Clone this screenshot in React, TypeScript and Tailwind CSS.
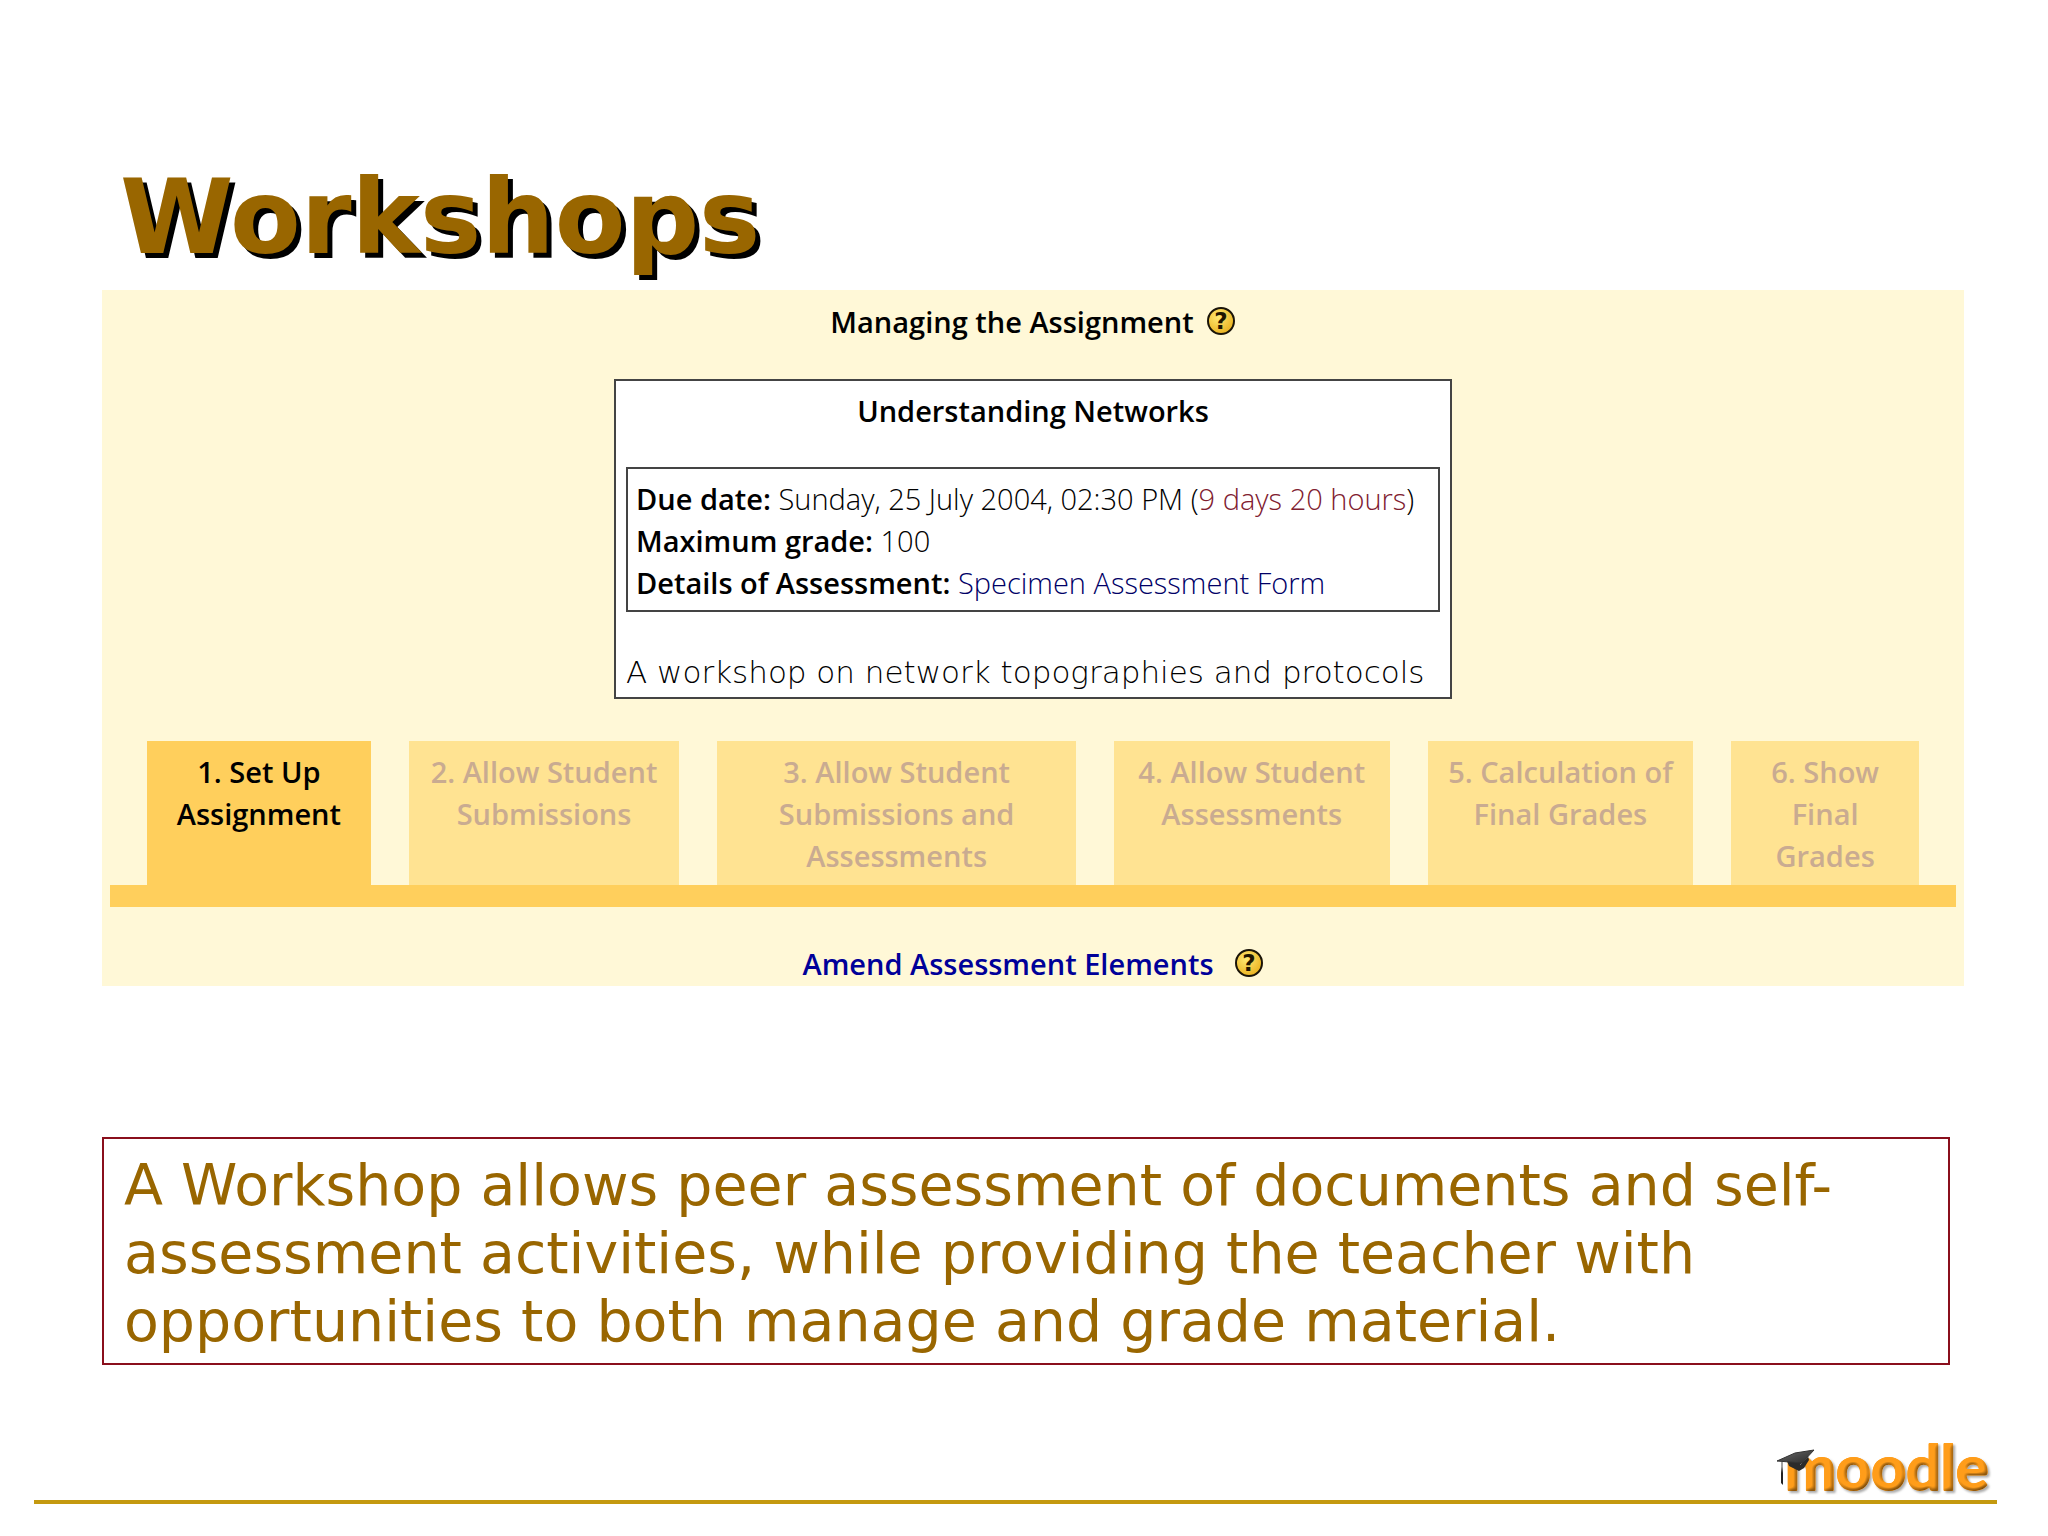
const stages = [
  { lines: ['1. Set Up', 'Assignment'], active: true },
  { lines: ['2. Allow Student', 'Submissions'] },
  { lines: ['3. Allow Student', 'Submissions and', 'Assessments'] },
  { lines: ['4. Allow Student', 'Assessments'] },
  { lines: ['5. Calculation of', 'Final Grades'] },
  { lines: ['6. Show', 'Final', 'Grades'] },
]

const HelpButton = () => (
  <button type="button" aria-label="Help" className="shrink-0">
    <svg width="30" height="30" viewBox="0 0 30 30">
      <defs>
        <radialGradient id="coin" cx="0.4" cy="0.35" r="0.7">
          <stop offset="0" stopColor="#ffe873" />
          <stop offset="1" stopColor="#e9b01c" />
        </radialGradient>
      </defs>
      <circle cx="15" cy="14" r="13" fill="url(#coin)" stroke="#1a1408" strokeWidth="2" />
      <text x="15" y="22" textAnchor="middle" className="font-['DejaVu_Sans'] text-[23px] font-bold" fill="#1f1500">?</text>
    </svg>
  </button>
)

const MoodleLogo = () => (
  <svg width="228" height="76" viewBox="0 0 228 76" role="img" aria-label="moodle" className="-mr-1 -mb-1 overflow-visible">
    <defs>
      <linearGradient id="cap" x1="0" y1="0" x2="1" y2="1">
        <stop offset="0" stopColor="#777" />
        <stop offset="0.5" stopColor="#4a4a4a" />
        <stop offset="1" stopColor="#2a2a2a" />
      </linearGradient>
      <filter id="bevel" x="-5%" y="-10%" width="112%" height="130%" colorInterpolationFilters="sRGB">
        <feDropShadow in="SourceGraphic" dx="2" dy="2" stdDeviation="1" floodColor="#888" floodOpacity="0.7" result="shadow" />
        <feGaussianBlur in="SourceAlpha" stdDeviation="2" result="soft" />
        <feDiffuseLighting in="soft" surfaceScale="2" diffuseConstant="1.25" lightingColor="#fff" result="light">
          <feDistantLight azimuth="235" elevation="58" />
        </feDiffuseLighting>
        <feComposite in="light" in2="SourceGraphic" operator="arithmetic" k1="1" k2="0" k3="0" k4="0" result="shaded" />
        <feComposite in="shaded" in2="SourceAlpha" operator="in" result="letters" />
        <feMerge>
          <feMergeNode in="shadow" />
          <feMergeNode in="letters" />
        </feMerge>
      </filter>
    </defs>
    <text x="12" y="62" className="font-['Lato'] text-[61px] font-bold" fill="#ff9d1a" stroke="#ff9d1a" strokeWidth="2" strokeLinejoin="round" filter="url(#bevel)">moodle</text>
    <path d="M14 33 L16 38 L26 43 L31 40 L36 32 L35 28 Z" fill="#2b2b2b" />
    <path d="M27 37 L35 29" stroke="#777" strokeWidth="1" />
    <path d="M4 33 L22 25 L41 22 L29 35 Z" fill="url(#cap)" stroke="#333" strokeWidth="1" strokeLinejoin="round" />
    <path d="M9 34 L9 47" stroke="#444" strokeWidth="1" />
    <path d="M9 39 L10 45 L10 57 L8 55 L8 45 Z" fill="#222" />
  </svg>
)

const App = () => {
  return (
    <div className="flex min-h-screen flex-col bg-white font-['DejaVu_Sans',sans-serif]">
      <main className="pt-[157px] pr-[84px] pl-[102px]">
        <h1 className="pl-[18px] text-[103px] leading-[120px] font-bold text-[#996600] [text-shadow:5px_5px_0_#000]">Workshops</h1>

        <section className="mt-[13px] bg-[#fff8d7] px-2 pt-[11px] pb-px font-['Open_Sans',sans-serif] text-[29px] leading-[42px] text-black">
          <div className="flex items-center justify-center gap-3">
            <h2 className="font-semibold">Managing the Assignment</h2>
            <HelpButton />
          </div>

          <div className="mx-auto mt-9 w-[838px] max-w-full border-2 border-[#444] bg-white px-[10px] pt-[9px] pb-1">
            <h3 className="text-center font-semibold">Understanding Networks</h3>
            <div className="mt-[35px] border-2 border-[#444] px-2 pt-[9px] pb-[6px] font-light">
              <p><b className="font-semibold">Due date:</b> Sunday, 25 July 2004, 02:30 PM (<span className="text-[#802030]">9 days 20 hours</span>)</p>
              <p><b className="font-semibold">Maximum grade:</b> 100</p>
              <p><b className="font-semibold">Details of Assessment:</b> <a href="#specimen" className="text-[#000066]">Specimen Assessment Form</a></p>
            </div>
            <p className="mt-[39px] font-['DejaVu_Sans'] text-[31px] font-extralight">A workshop on network topographies and protocols</p>
          </div>

          <nav className="mt-[42px] grid grid-cols-[224fr_271fr_359fr_276fr_266fr_188fr] gap-[38px] border-b-[22px] border-[#ffcf5c] px-[37px]">
            {stages.map((stage) => (
              <button
                key={stage.lines.join(' ')}
                type="button"
                disabled={!stage.active}
                className={`flex h-36 flex-col items-center pt-[10px] font-semibold whitespace-nowrap ${stage.active ? 'bg-[#ffcf5c] text-black' : 'bg-[#ffe392] text-[#c9ab91]'}`}
              >
                {stage.lines.map((line) => (
                  <span key={line}>{line}</span>
                ))}
              </button>
            ))}
          </nav>

          <div className="mt-9 flex items-center justify-center gap-5">
            <a href="#amend" className="font-semibold text-[#000099]">Amend Assessment Elements</a>
            <HelpButton />
          </div>
        </section>

        <p className="mt-[151px] mr-[14px] border-2 border-[#8a0f1c] px-5 pt-3 pb-2 text-[57px] leading-[68px] text-[#996600]">
          A Workshop allows peer assessment of documents and self-assessment activities, while providing the teacher with opportunities to both manage and grade material.
        </p>
      </main>

      <footer className="mt-auto mr-[51px] mb-8 ml-[34px] flex justify-end border-b-4 border-[#c4990f]">
        <MoodleLogo />
      </footer>
    </div>
  )
}

export default App
